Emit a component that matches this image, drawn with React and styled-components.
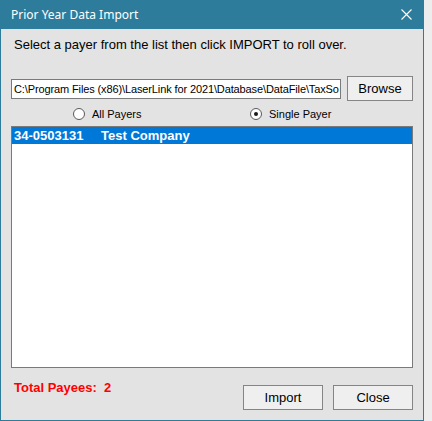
import React, { useState } from 'react';
import styled, { createGlobalStyle } from 'styled-components';

const GlobalStyle = createGlobalStyle`
  html, body {
    margin: 0;
    padding: 0;
    background: #ededed;
  }
  * {
    box-sizing: border-box;
  }
`;

const Window = styled.div`
  width: 424px;
  height: 421px;
  display: flex;
  flex-direction: column;
  border: 1px solid #2e7c9b;
  border-top: none;
  background: #e3e3e3;
  font-family: 'Liberation Sans', Arial, sans-serif;
  color: #000;
`;

const TitleBar = styled.div`
  height: 29px;
  margin: 0 -1px;
  padding: 0 11px 0 11px;
  display: flex;
  align-items: center;
  justify-content: space-between;
  background: #2e7c9b;
  color: #fff;
  font-family: 'Noto Sans', 'Open Sans', sans-serif;
  font-size: 12px;
`;

const CloseIcon = styled.svg`
  width: 11px;
  height: 11px;
  margin-right: 1px;
`;

const Body = styled.div`
  flex: 1;
  display: flex;
  flex-direction: column;
  padding: 0 10px;
`;

const Instruction = styled.div`
  margin: 8px 0 0 3px;
  font-size: 13px;
  line-height: 16px;
`;

const PathRow = styled.div`
  margin-top: 23px;
  height: 25px;
  display: flex;
  align-items: center;
  gap: 6px;
`;

const PathBox = styled.div`
  flex: 1;
  min-width: 0;
  height: 20px;
  padding: 0 1px 0 2px;
  border: 1px solid #7a7a7a;
  background: #fff;
  font-size: 11px;
  letter-spacing: -0.12px;
  line-height: 18px;
  white-space: nowrap;
  overflow: hidden;
`;

const Button = styled.button`
  width: ${({ $w }) => $w}px;
  height: 25px;
  padding: 0;
  border: 1px solid #858585;
  background: #efefef;
  font-family: 'Liberation Sans', Arial, sans-serif;
  font-size: 13px;
  color: #000;
`;

const RadioRow = styled.div`
  margin-top: 5px;
  height: 16px;
  padding-left: 62px;
  display: grid;
  grid-template-columns: 177px auto;
  align-items: center;
`;

const RadioOption = styled.label`
  display: flex;
  align-items: center;
  gap: 7px;
  font-size: 11px;
`;

const RadioCircle = styled.span`
  width: 12px;
  height: 12px;
  border-radius: 50%;
  border: 1px solid #5a5a5a;
  background: #fff;
  display: flex;
  align-items: center;
  justify-content: center;

  &::after {
    content: '';
    width: 4px;
    height: 4px;
    border-radius: 50%;
    background: ${({ $on }) => ($on ? '#1a1a1a' : 'transparent')};
  }
`;

const ListBox = styled.div`
  margin-top: 4px;
  height: 242px;
  border: 1px solid #7a7a7a;
  background: #fff;
`;

const ListRow = styled.div`
  height: 17px;
  padding-left: 2px;
  display: grid;
  grid-template-columns: 87px 1fr;
  align-items: center;
  font-size: 13px;
  font-weight: bold;
  background: ${({ $selected }) => ($selected ? '#0078d7' : 'transparent')};
  color: ${({ $selected }) => ($selected ? '#fff' : '#000')};
`;

const Footer = styled.div`
  display: flex;
  justify-content: space-between;
  align-items: flex-start;
`;

const Total = styled.div`
  margin: 12px 0 0 3px;
  font-size: 13px;
  line-height: 16px;
  font-weight: bold;
  color: #ff0000;
  white-space: pre;
`;

const ButtonGroup = styled.div`
  margin-top: 17px;
  display: flex;
  gap: 10px;
`;

const payers = [{ ein: '34-0503131', name: 'Test Company' }];

export default function App() {
  const [mode, setMode] = useState('single');

  return (
    <>
      <GlobalStyle />
      <Window>
        <TitleBar>
          <span>Prior Year Data Import</span>
          <CloseIcon viewBox="0 0 11 11">
            <path d="M0.5 0.5 L10.5 10.5 M10.5 0.5 L0.5 10.5" stroke="#fff" strokeWidth="1.1" />
          </CloseIcon>
        </TitleBar>
        <Body>
          <Instruction>Select a payer from the list then click IMPORT to roll over.</Instruction>
          <PathRow>
            <PathBox>C:\Program Files (x86)\LaserLink for 2021\Database\DataFile\TaxSo</PathBox>
            <Button $w={66}>Browse</Button>
          </PathRow>
          <RadioRow>
            <RadioOption onClick={() => setMode('all')}>
              <RadioCircle $on={mode === 'all'} />
              All Payers
            </RadioOption>
            <RadioOption onClick={() => setMode('single')}>
              <RadioCircle $on={mode === 'single'} />
              Single Payer
            </RadioOption>
          </RadioRow>
          <ListBox>
            {payers.map((p) => (
              <ListRow key={p.ein} $selected>
                <span>{p.ein}</span>
                <span>{p.name}</span>
              </ListRow>
            ))}
          </ListBox>
          <Footer>
            <Total>Total Payees:  2</Total>
            <ButtonGroup>
              <Button $w={80}>Import</Button>
              <Button $w={80}>Close</Button>
            </ButtonGroup>
          </Footer>
        </Body>
      </Window>
    </>
  );
}
